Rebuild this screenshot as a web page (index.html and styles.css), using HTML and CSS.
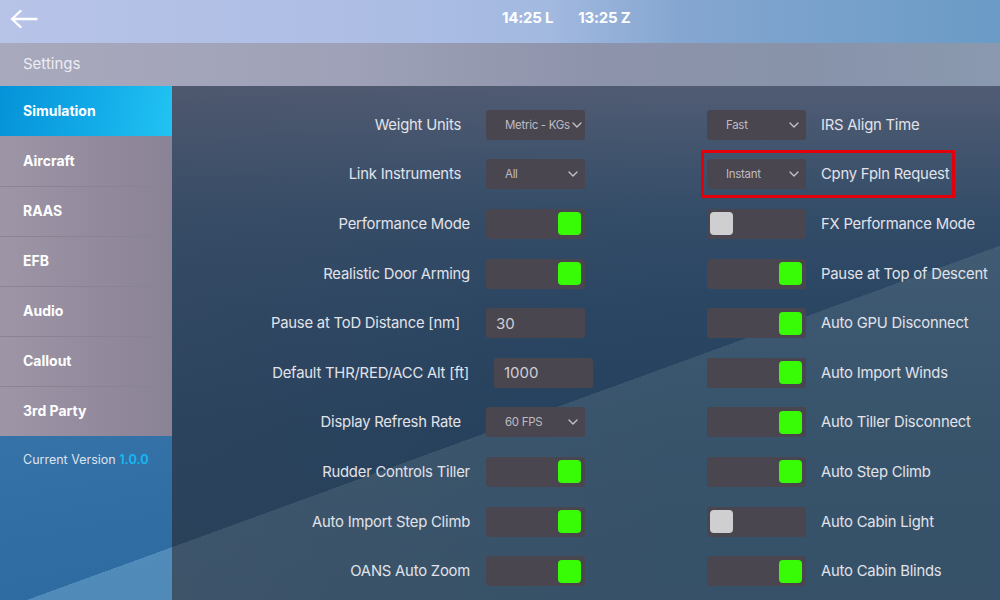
FILE: index.html
```html
<!DOCTYPE html>
<html lang="en">
<head>
<meta charset="utf-8">
<title>Settings</title>
<link rel="stylesheet" href="styles.css">
</head>
<body>
<div class="app">
  <header class="topbar">
    <svg class="back" viewBox="0 0 28 18" width="28" height="18" aria-label="Back">
      <path d="M2 9 H26.5 M10.5 1 L2 9 L10.5 17" fill="none" stroke="#fff" stroke-width="2.4" stroke-linecap="round" stroke-linejoin="round"/>
    </svg>
    <div class="clock"><span>14:25 L</span><span>13:25 Z</span></div>
  </header>
  <div class="titlebar">Settings</div>
  <div class="main">
    <nav class="sidebar">
      <ul class="menu">
        <li class="item active">Simulation</li>
        <li class="item">Aircraft</li>
        <li class="item">RAAS</li>
        <li class="item">EFB</li>
        <li class="item">Audio</li>
        <li class="item">Callout</li>
        <li class="item">3rd Party</li>
      </ul>
      <div class="version">Current Version <b>1.0.0</b></div>
    </nav>
    <section class="content">
      <div class="cell-l sel"><span class="label">Weight Units</span><div class="select tight"><span>Metric - KGs</span><svg class="chev" viewBox="0 0 10 6"><path d="M1 1 L5 5 L9 1"/></svg></div></div>
      <div class="cell-r"><div class="select"><span>Fast</span><svg class="chev" viewBox="0 0 10 6"><path d="M1 1 L5 5 L9 1"/></svg></div><span class="label">IRS Align Time</span></div>

      <div class="cell-l sel"><span class="label">Link Instruments</span><div class="select"><span>All</span><svg class="chev" viewBox="0 0 10 6"><path d="M1 1 L5 5 L9 1"/></svg></div></div>
      <div class="cell-r"><div class="mark"><div class="select"><span>Instant</span><svg class="chev" viewBox="0 0 10 6"><path d="M1 1 L5 5 L9 1"/></svg></div><span class="label">Cpny Fpln Request</span></div></div>

      <div class="cell-l"><span class="label">Performance Mode</span><div class="toggle on"><i></i></div></div>
      <div class="cell-r"><div class="toggle"><i></i></div><span class="label">FX Performance Mode</span></div>

      <div class="cell-l"><span class="label">Realistic Door Arming</span><div class="toggle on"><i></i></div></div>
      <div class="cell-r"><div class="toggle on"><i></i></div><span class="label">Pause at Top of Descent</span></div>

      <div class="cell-l num"><span class="label">Pause at ToD Distance [nm]</span><div class="input">30</div></div>
      <div class="cell-r"><div class="toggle on"><i></i></div><span class="label">Auto GPU Disconnect</span></div>

      <div class="cell-l num wide"><span class="label">Default THR/RED/ACC Alt [ft]</span><div class="input">1000</div></div>
      <div class="cell-r"><div class="toggle on"><i></i></div><span class="label">Auto Import Winds</span></div>

      <div class="cell-l sel"><span class="label">Display Refresh Rate</span><div class="select"><span>60 FPS</span><svg class="chev" viewBox="0 0 10 6"><path d="M1 1 L5 5 L9 1"/></svg></div></div>
      <div class="cell-r"><div class="toggle on"><i></i></div><span class="label">Auto Tiller Disconnect</span></div>

      <div class="cell-l"><span class="label">Rudder Controls Tiller</span><div class="toggle on"><i></i></div></div>
      <div class="cell-r"><div class="toggle on"><i></i></div><span class="label">Auto Step Climb</span></div>

      <div class="cell-l"><span class="label">Auto Import Step Climb</span><div class="toggle on"><i></i></div></div>
      <div class="cell-r"><div class="toggle"><i></i></div><span class="label">Auto Cabin Light</span></div>

      <div class="cell-l"><span class="label">OANS Auto Zoom</span><div class="toggle on"><i></i></div></div>
      <div class="cell-r"><div class="toggle on"><i></i></div><span class="label">Auto Cabin Blinds</span></div>
    </section>
  </div>
</div>
</body>
</html>
```

FILE: styles.css
```css
* { box-sizing: border-box; }
html, body { margin: 0; height: 100%; }
body {
  overflow: hidden;
  font-family: Inter, "Noto Sans", "DejaVu Sans", sans-serif;
  color: #e2e3ea;
  background: #2f6aa0;
}
.app {
  width: 1000px;
  height: 600px;
  display: flex;
  flex-direction: column;
}

/* top bar */
.topbar {
  height: 43px;
  flex: none;
  display: flex;
  align-items: flex-start;
  padding: 10px 0 0 10px;
  background: linear-gradient(90deg, #b8c3e8 0%, #acbde4 40%, #a2b9e0 55%, #85a6d0 68%, #7aa2cc 80%, #6a9bc6 100%);
}
.back { display: block; }
.clock {
  margin-left: 464px;
  display: flex;
  gap: 25px;
  font-weight: 700;
  font-size: 15px;
  line-height: 15px;
  color: #fff;
  letter-spacing: -0.2px;
}

/* title bar */
.titlebar {
  height: 43px;
  flex: none;
  display: flex;
  align-items: center;
  padding: 0 0 2px 23px;
  font-size: 15px;
  color: #ecedf4;
  background: linear-gradient(90deg, #a9a9bd 0%, #9ea1b7 35%, #8d93ab 60%, #8893aa 80%, #8a99af 100%);
}

.main {
  flex: 1;
  display: flex;
  min-height: 0;
}

/* sidebar */
.sidebar {
  width: 172px;
  flex: none;
  background:
    linear-gradient(160deg, transparent 573px, rgba(150, 205, 235, 0.32) 573px) fixed,
    linear-gradient(170deg, #4887b8 0%, #3a78ac 40%, #2d6aa0 100%);
}
.menu {
  list-style: none;
  margin: 0;
  padding: 0;
  background: linear-gradient(90deg, #9e96a7 0%, #928a9c 60%, #8a8295 100%);
}
.item {
  height: 50px;
  display: flex;
  align-items: center;
  padding: 0 0 2px 23px;
  font-size: 14px;
  font-weight: 700;
  color: #fff;
  border-top: 1px solid #8a8393;
}
.item:first-child { border-top: none; }
.item.active {
  background: linear-gradient(100deg, #0592d8 0%, #12abe8 55%, #22c3f3 100%);
}
.item.active + .item { border-top: none; }
.version {
  padding: 16px 0 0 23px;
  font-size: 12.5px;
  line-height: 15px;
  color: #dfe3ee;
}
.version b { color: #15b5f2; font-weight: 700; }

/* content */
.content {
  flex: 1;
  display: grid;
  grid-template-columns: 413px 1fr;
  column-gap: 122px;
  grid-auto-rows: 49.6px;
  padding-top: 14px;
  background:
    linear-gradient(160deg, transparent 573px, rgba(135, 160, 165, 0.2) 573px) fixed,
    linear-gradient(90deg, rgba(70, 75, 95, 0.25) 0%, rgba(0, 0, 0, 0) 60%),
    linear-gradient(180deg, #515c74 0px, #45566f 50px, #334c68 130px, #2a4663 220px, #24415d 340px, #213d58 514px);
}
.label {
  font-size: 14.8px;
  color: #e2e3ea;
  white-space: nowrap;
  letter-spacing: -0.2px;
}
.cell-l {
  display: flex;
  justify-content: flex-end;
  align-items: center;
  gap: 16px;
}
.cell-l.sel { gap: 25px; }
.cell-l.num { gap: 26px; }
.cell-l.wide { gap: 25px; margin-right: -8px; }
.cell-r {
  display: flex;
  align-items: center;
  gap: 15px;
}
.mark {
  display: flex;
  align-items: center;
  gap: 15px;
  padding: 6px 3px;
  margin: -6px -3px;
  outline: 3px solid #e3000b;
}

/* controls */
.select, .toggle, .input {
  width: 99px;
  height: 30px;
  flex: none;
  border-radius: 3px;
  background: #4a464f;
}
.select {
  display: flex;
  align-items: center;
  justify-content: space-between;
  padding: 0 7px 0 19px;
  font-size: 11.5px;
  color: #bdbcc4;
  letter-spacing: -0.3px;
  white-space: nowrap;
}
.select.tight {
  justify-content: flex-start;
  gap: 2px;
  padding-right: 3px;
}
.chev {
  width: 10px;
  height: 6px;
  flex: none;
}
.chev path {
  fill: none;
  stroke: #c4c3ca;
  stroke-width: 1.3;
  stroke-linecap: round;
  stroke-linejoin: round;
}
.input {
  display: flex;
  align-items: center;
  padding-left: 10px;
  font-size: 15px;
  color: #cfcfd6;
}
.toggle {
  display: flex;
  align-items: center;
  justify-content: flex-start;
  padding: 0 3px;
}
.toggle.on { justify-content: flex-end; padding-right: 4px; }
.toggle i {
  width: 23px;
  height: 23px;
  border-radius: 4px;
  background: #cfcfd2;
}
.toggle.on i { background: #37fc05; }
```
